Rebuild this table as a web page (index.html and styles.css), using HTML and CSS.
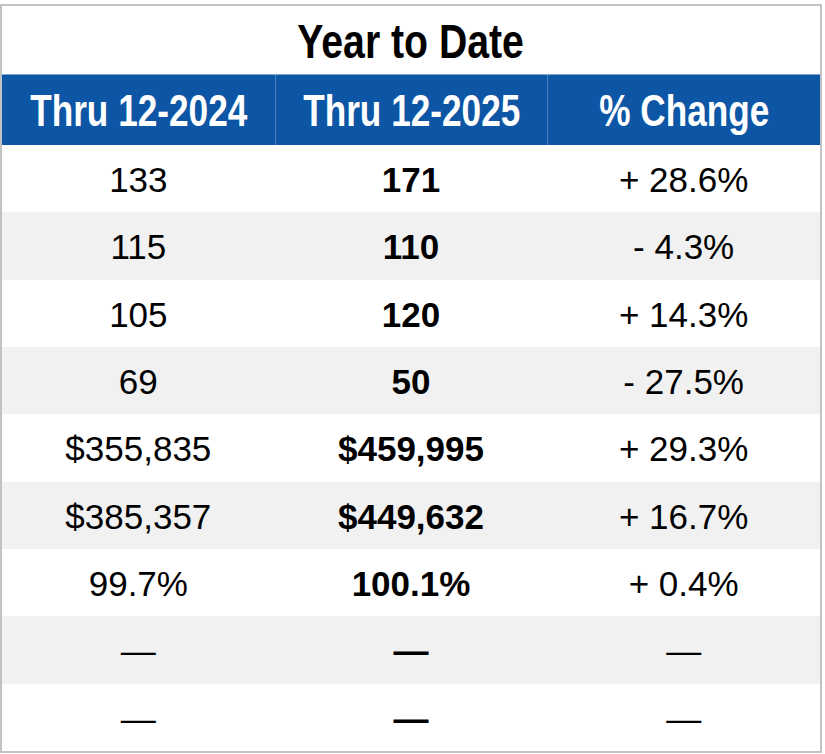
FILE: index.html
```html
<!DOCTYPE html>
<html lang="en">
<head>
<meta charset="utf-8">
<title>Year to Date</title>
<link rel="stylesheet" href="styles.css">
</head>
<body>
<div class="ytd">
  <div class="title"><span class="narrow">Year to Date</span></div>
  <div class="head">
    <div class="hcell"><span class="narrow">Thru 12-2024</span></div>
    <div class="hcell"><span class="narrow">Thru 12-2025</span></div>
    <div class="hcell"><span class="narrow">% Change</span></div>
  </div>
  <div class="row"><div class="cell">133</div><div class="cell bold">171</div><div class="cell">+ 28.6%</div></div>
  <div class="row alt"><div class="cell">115</div><div class="cell bold">110</div><div class="cell">- 4.3%</div></div>
  <div class="row"><div class="cell">105</div><div class="cell bold">120</div><div class="cell">+ 14.3%</div></div>
  <div class="row alt"><div class="cell">69</div><div class="cell bold">50</div><div class="cell">- 27.5%</div></div>
  <div class="row"><div class="cell">$355,835</div><div class="cell bold">$459,995</div><div class="cell">+ 29.3%</div></div>
  <div class="row alt"><div class="cell">$385,357</div><div class="cell bold">$449,632</div><div class="cell">+ 16.7%</div></div>
  <div class="row"><div class="cell">99.7%</div><div class="cell bold">100.1%</div><div class="cell">+ 0.4%</div></div>
  <div class="row alt"><div class="cell">—</div><div class="cell bold">—</div><div class="cell">—</div></div>
  <div class="row"><div class="cell">—</div><div class="cell bold">—</div><div class="cell">—</div></div>
</div>
</body>
</html>
```

FILE: styles.css
```css
html, body {
  margin: 0;
  padding: 0;
  background: #ffffff;
}

.ytd {
  box-sizing: border-box;
  width: 822px;
  height: 749px;
  margin-top: 4px;
  border: 2px solid #c2c2c2;
  display: flex;
  flex-direction: column;
  font-family: "Liberation Sans", Arial, sans-serif;
  color: #000;
}

.narrow {
  display: inline-block;
  white-space: nowrap;
  font-weight: bold;
  transform: scaleX(0.8);
  transform-origin: center;
}

.title {
  height: 68px;
  display: flex;
  align-items: center;
  justify-content: center;
  font-size: 49px;
  padding-top: 1px;
  box-sizing: border-box;
}

.head {
  height: 71px;
  display: grid;
  grid-template-columns: 1fr 1fr 1fr;
  background: #0c56a5;
  border-top: 1px solid #7fa5d2;
  box-sizing: border-box;
}

.hcell {
  display: flex;
  align-items: center;
  justify-content: center;
  color: #fff;
  font-size: 44px;
  padding-top: 2px;
  white-space: nowrap;
}

.hcell + .hcell {
  border-left: 1px solid #4f82bd;
}

.row {
  flex: 1;
  display: grid;
  grid-template-columns: 1fr 1fr 1fr;
  background: #ffffff;
}

.row.alt {
  background: #f1f1f1;
}

.cell {
  display: flex;
  align-items: center;
  justify-content: center;
  font-size: 35px;
  padding-top: 3px;
}

.cell.bold {
  font-weight: bold;
}
```
